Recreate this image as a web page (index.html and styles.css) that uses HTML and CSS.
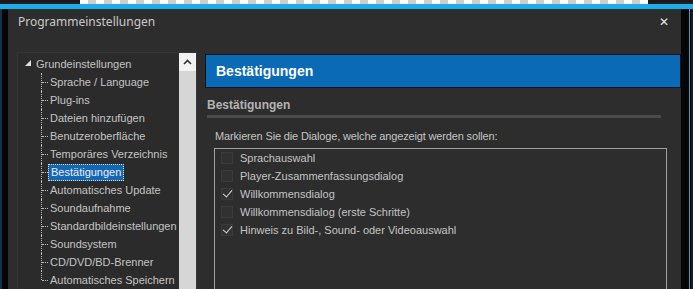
FILE: index.html
```html
<!DOCTYPE html>
<html lang="de">
<head>
    <meta charset="UTF-8">
    <title>Programmeinstellungen</title>
    <link rel="stylesheet" href="styles.css">
</head>
<body>

<div class="desk-strip">
    <div class="desk-dark"></div>
    <div class="desk-checker"></div>
    <div class="desk-dark desk-right"></div>
</div>

<div class="window">
    <div class="edge-left"></div>

    <div class="dialog">
        <div class="titlebar">
            <span class="title">Programmeinstellungen</span>
            <span class="close">&#x2715;</span>
        </div>

        <div class="body">
            <div class="tree">
                <ul class="tree-list">
                    <li class="root"><span class="expander"></span>Grundeinstellungen</li>
                    <li class="child">Sprache / Language</li>
                    <li class="child">Plug-ins</li>
                    <li class="child">Dateien hinzufügen</li>
                    <li class="child">Benutzeroberfläche</li>
                    <li class="child">Temporäres Verzeichnis</li>
                    <li class="child"><span class="selected">Bestätigungen</span></li>
                    <li class="child">Automatisches Update</li>
                    <li class="child">Soundaufnahme</li>
                    <li class="child">Standardbildeinstellungen</li>
                    <li class="child">Soundsystem</li>
                    <li class="child">CD/DVD/BD-Brenner</li>
                    <li class="child last">Automatisches Speichern</li>
                </ul>
                <div class="scrollbar">
                    <div class="scroll-up">
                        <svg width="9" height="6" viewBox="0 0 9 6"><path d="M1 5 L4.5 1.5 L8 5" fill="none" stroke="#333" stroke-width="1.6"/></svg>
                    </div>
                </div>
            </div>

            <div class="page">
                <div class="page-head">Bestätigungen</div>
                <div class="section">Bestätigungen</div>
                <p class="hint">Markieren Sie die Dialoge, welche angezeigt werden sollen:</p>
                <div class="listbox">
                    <label class="item"><span class="box"></span>Sprachauswahl</label>
                    <label class="item"><span class="box"></span>Player-Zusammenfassungsdialog</label>
                    <label class="item"><span class="box checked"></span>Willkommensdialog</label>
                    <label class="item"><span class="box"></span>Willkommensdialog (erste Schritte)</label>
                    <label class="item"><span class="box checked"></span>Hinweis zu Bild-, Sound- oder Videoauswahl</label>
                </div>
            </div>
        </div>
    </div>

    <div class="edge-right"></div>
</div>

</body>
</html>
```

FILE: styles.css
```css
* { box-sizing: border-box; }
html, body { margin: 0; padding: 0; height: 100%; overflow: hidden; }
body {
    background: #0b0b0b;
    font-family: "Liberation Sans", Arial, sans-serif;
    font-size: 11px;
    color: #c4c4c4;
}

/* strip of desktop above the window */
.desk-strip { display: flex; height: 4px; }
.desk-dark { width: 80px; background: #1d1a1d; }
.desk-right { width: 45px; }
.desk-checker {
    flex: 1;
    background-color: #fff;
    background-image: conic-gradient(#cfcfcf 25%, #fff 0 50%, #cfcfcf 0 75%, #fff 0);
    background-size: 16px 16px;
}

.window {
    display: flex;
    height: calc(100% - 4px);
    border-top: 5px solid #1baee9;
}
.edge-left {
    width: 8px;
    background: #050505;
    border-left: 2px solid #12344a;
}
.edge-right {
    width: 12px;
    background: #0a0a0a;
    border-left: 8px solid #050505;
    border-right: 2px solid #1b1b1b;
    box-shadow: inset 1px 0 0 #3a9fd0;
}

.dialog {
    flex: 1;
    min-height: 0;
    overflow: hidden;
    background: #2d2d2d;
    display: flex;
    flex-direction: column;
}
.titlebar {
    flex-shrink: 0;
    height: 38px;
    display: flex;
    align-items: flex-start;
    justify-content: space-between;
    padding: 4px 12px 0 10px;
    line-height: 18px;
}
.title {
    font-family: "Noto Sans", sans-serif;
    font-size: 12px;
    color: #c9c9c9;
}
.close {
    font-family: "DejaVu Sans", sans-serif;
    font-size: 12px;
    font-weight: bold;
    color: #e6e6e6;
}

.body {
    flex: 1;
    min-height: 0;
    display: flex;
    gap: 8px;
    padding: 5px 0 0 9px;
}

/* left navigation tree */
.tree {
    width: 180px;
    display: flex;
    background: #2b2b2b;
    border: 1px solid #353535;
    border-bottom: none;
}
.tree-list {
    flex: 1;
    list-style: none;
    margin: 0;
    padding: 2px 0 0 0;
}
.tree-list li {
    height: 18px;
    line-height: 18px;
    white-space: nowrap;
}
.root {
    display: flex;
    align-items: center;
    padding-left: 7px;
}
.expander {
    width: 0;
    height: 0;
    border-left: 6px solid transparent;
    border-bottom: 6px solid #e0e0e0;
    margin-right: 5px;
    margin-top: -2px;
}
.child {
    position: relative;
    padding-left: 32px;
}
.child::before {
    content: "";
    position: absolute;
    left: 23px;
    top: 0;
    height: 100%;
    border-left: 1px dotted #bdbdbd;
}
.child.last::before { height: 9px; }
.child::after {
    content: "";
    position: absolute;
    left: 24px;
    top: 9px;
    width: 6px;
    border-top: 1px dotted #bdbdbd;
}
.selected {
    display: inline-block;
    margin-left: -2px;
    padding: 0 2px;
    height: 17px;
    line-height: 15px;
    background: #1667b2;
    color: #e8eef6;
    border: 1px dotted #d8d8d8;
}

.scrollbar {
    width: 17px;
    background: #d6d6d6;
}
.scroll-up {
    height: 18px;
    background: #f1f1f1;
    display: flex;
    align-items: center;
    justify-content: center;
}

/* right settings page */
.page {
    flex: 1;
    padding-top: 2px;
}
.page-head {
    height: 34px;
    line-height: 32px;
    padding-left: 10px;
    background: #0a6ab6;
    border: 1px solid #0c1420;
    color: #fff;
    font-size: 14px;
    font-weight: bold;
}
.section {
    margin: 10px 20px 0 2px;
    padding-bottom: 3px;
    font-size: 12px;
    font-weight: bold;
    color: #b3b3b3;
    border-bottom: 3px solid #4a4a4a;
}
.hint {
    margin: 11px 0 0 10px;
    line-height: 14px;
    letter-spacing: -0.15px;
}
.listbox {
    margin: 5px 14px 0 9px;
    height: 200px;
    border: 1px solid #a0a0a0;
}
.item {
    display: flex;
    align-items: center;
    height: 18px;
    padding-left: 6px;
}
.box {
    position: relative;
    width: 12px;
    height: 12px;
    margin-right: 7px;
    background: #313131;
    border: 1px solid #3a3a3a;
}
.box.checked::after {
    content: "";
    position: absolute;
    left: 3px;
    top: -1px;
    width: 4px;
    height: 8px;
    border-right: 1.5px solid #d8d8d8;
    border-bottom: 1.5px solid #d8d8d8;
    transform: rotate(40deg);
}
```
